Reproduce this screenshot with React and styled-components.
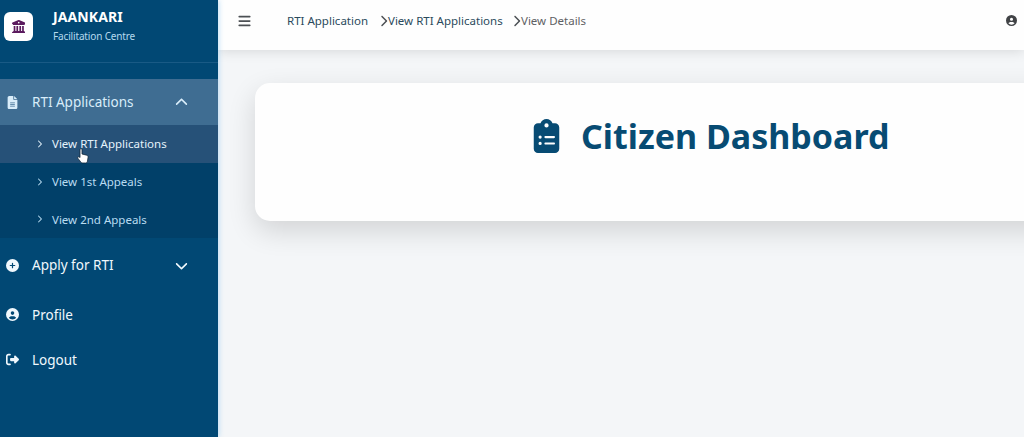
import React from "react";
import styled, { createGlobalStyle } from "styled-components";
import {
  FaBars,
  FaBuildingColumns,
  FaChevronDown,
  FaChevronRight,
  FaChevronUp,
  FaCirclePlus,
  FaCircleUser,
  FaClipboardList,
  FaFileLines,
  FaRightFromBracket,
} from "react-icons/fa6";

const GlobalStyle = createGlobalStyle`
  * { box-sizing: border-box; }
  body {
    margin: 0;
    overflow: hidden;
    background: #f4f6f8;
    font-family: Tahoma, "Noto Sans", "DejaVu Sans", sans-serif;
  }
`;

const Shell = styled.div`
  display: flex;
  width: 100vw;
  height: 100vh;
  overflow: hidden;
`;

const Sidebar = styled.aside`
  position: relative;
  z-index: 2;
  flex: 0 0 218px;
  display: flex;
  flex-direction: column;
  background: #014874;
  color: #e9f5fc;
  box-shadow: 1px 0 5px rgba(120, 190, 240, 0.45);
`;

const Brand = styled.header`
  display: flex;
  height: 63px;
  padding: 8px 0 0 4px;
  gap: 20px;
  border-bottom: 1px solid #195a85;
`;

const BrandMark = styled.div`
  display: grid;
  place-items: center;
  width: 29px;
  height: 29px;
  margin-top: 4px;
  border-radius: 6px;
  background: #fff;
  color: #5b1a5e;
  font-size: 13.5px;
  svg { display: block; }
`;

const BrandName = styled.div`
  font-size: 14px;
  line-height: 18px;
  font-weight: 700;
  letter-spacing: ${(p) => p.$track || "0.1px"};
  color: #fff;
`;

const BrandTag = styled.div`
  margin-top: 3px;
  font-size: 10px;
  line-height: 14px;
  letter-spacing: -0.15px;
  color: #b5d9ee;
`;

const Menu = styled.nav`
  padding-top: 16px;
`;

const MenuItem = styled.a`
  display: flex;
  align-items: center;
  height: ${(p) => p.$height}px;
  padding: 0 30px 0 5px;
  font-size: 13.5px;
  letter-spacing: ${(p) => p.$track || 0}px;
  color: ${(p) => (p.$open ? "#d9edfa" : "#f0f8fd")};
  background: ${(p) => (p.$open ? "#3f6d92" : "transparent")};
`;

const ItemIcon = styled.span`
  display: flex;
  justify-content: center;
  width: 14px;
  margin-right: 13px;
  font-size: 13px;
`;

const ItemArrow = styled.span`
  display: flex;
  margin-left: auto;
  font-size: 13px;
`;

const SubMenu = styled.div`
  height: 113px;
  background: #014069;
`;

const SubItem = styled.a`
  display: flex;
  align-items: center;
  gap: 9px;
  height: 37.7px;
  padding-left: 36px;
  font-size: 11.5px;
  letter-spacing: ${(p) => p.$track || 0}px;
  color: ${(p) => (p.$active ? "#e5f3fc" : "#b9dcf1")};
  background: ${(p) => (p.$active ? "#265178" : "transparent")};
  svg { width: 7px; height: 8px; }
`;

const Pointer = styled.svg`
  position: absolute;
  left: 77px;
  top: 148px;
  width: 12px;
  height: 16px;
`;

const Main = styled.main`
  flex: 1;
  min-width: 0;
  display: flex;
  flex-direction: column;
`;

const TopBar = styled.header`
  display: flex;
  align-items: center;
  height: 50px;
  padding: 0 7px 9px 20px;
  background: #fefefe;
  box-shadow: 0 1px 12px rgba(0, 0, 0, 0.13);
  color: #4c5054;
`;

const MenuButton = styled.span`
  display: flex;
  width: 13px;
  margin-right: 36px;
  font-size: 14px;
`;

const Crumbs = styled.div`
  display: flex;
  align-items: center;
  font-size: 11.5px;
  white-space: nowrap;
  svg { width: 9px; height: 12px; }
`;

const Crumb = styled.span`
  width: ${(p) => p.$width}px;
  letter-spacing: ${(p) => p.$track || 0}px;
  color: ${(p) => (p.$current ? "#5e6164" : "#2b4a5c")};
`;

const Account = styled.span`
  display: flex;
  margin-left: auto;
  font-size: 11px;
  color: #414346;
`;

const Hero = styled.section`
  display: flex;
  justify-content: flex-start;
  align-items: flex-start;
  height: 138px;
  margin: 33px -50px 0 37px;
  padding: 36px 0 0 278px;
  border-radius: 15px;
  background: #fefefe;
  box-shadow: 0 10px 28px rgba(0, 0, 0, 0.14);
  color: #074b73;
`;

const HeroIcon = styled.span`
  display: flex;
  width: 27px;
  margin-right: 21px;
  svg { width: 27px; height: 34px; }
`;

const Title = styled.h1`
  margin: -6px 0 0;
  font-size: 34px;
  line-height: 46px;
  font-weight: 700;
  letter-spacing: 0;
  white-space: nowrap;
`;

export default function App() {
  return (
    <Shell>
      <GlobalStyle />
      <Sidebar>
        <Brand>
          <BrandMark><FaBuildingColumns /></BrandMark>
          <div>
            <BrandName>JAANKARI</BrandName>
            <BrandTag>Facilitation Centre</BrandTag>
          </div>
        </Brand>
        <Menu>
          <MenuItem $height={46} $open>
            <ItemIcon><FaFileLines /></ItemIcon>
            RTI Applications
            <ItemArrow><FaChevronUp /></ItemArrow>
          </MenuItem>
          <SubMenu>
            <SubItem $active><FaChevronRight />View RTI Applications</SubItem>
            <SubItem><FaChevronRight />View 1st Appeals</SubItem>
            <SubItem><FaChevronRight />View 2nd Appeals</SubItem>
          </SubMenu>
          <MenuItem $height={54}>
            <ItemIcon><FaCirclePlus /></ItemIcon>
            Apply for RTI
            <ItemArrow><FaChevronDown /></ItemArrow>
          </MenuItem>
          <MenuItem $height={45}>
            <ItemIcon><FaCircleUser /></ItemIcon>
            Profile
          </MenuItem>
          <MenuItem $height={45}>
            <ItemIcon><FaRightFromBracket /></ItemIcon>
            Logout
          </MenuItem>
        </Menu>
        <Pointer viewBox="0 0 12 16" aria-hidden="true">
          <path
            d="M3 1.7C3 .3 5 .3 5 1.7V6l4.7 1.2c1 .3 1.5.9 1.4 2L10.500 13c-.2 1.400-.9 2-2 2H5.700c-.8 0-1.500-.4-2-1.100L.8 10.200c-.5-.9.5-1.900 1.500-1.200l.7.6z"
            fill="#fff"
            stroke="#10273a"
            strokeWidth="0.8"
          />
        </Pointer>
      </Sidebar>
      <Main>
        <TopBar>
          <MenuButton><FaBars /></MenuButton>
          <Crumbs>
            <Crumb $width={92}>RTI Application</Crumb>
            <FaChevronRight />
            <Crumb $width={124} style={undefined}>View RTI Applications</Crumb>
            <FaChevronRight />
            <Crumb $current $width={64}>View Details</Crumb>
          </Crumbs>
          <Account><FaCircleUser /></Account>
        </TopBar>
        <Hero>
          <HeroIcon><FaClipboardList /></HeroIcon>
          <Title>Citizen Dashboard</Title>
        </Hero>
      </Main>
    </Shell>
  );
}
